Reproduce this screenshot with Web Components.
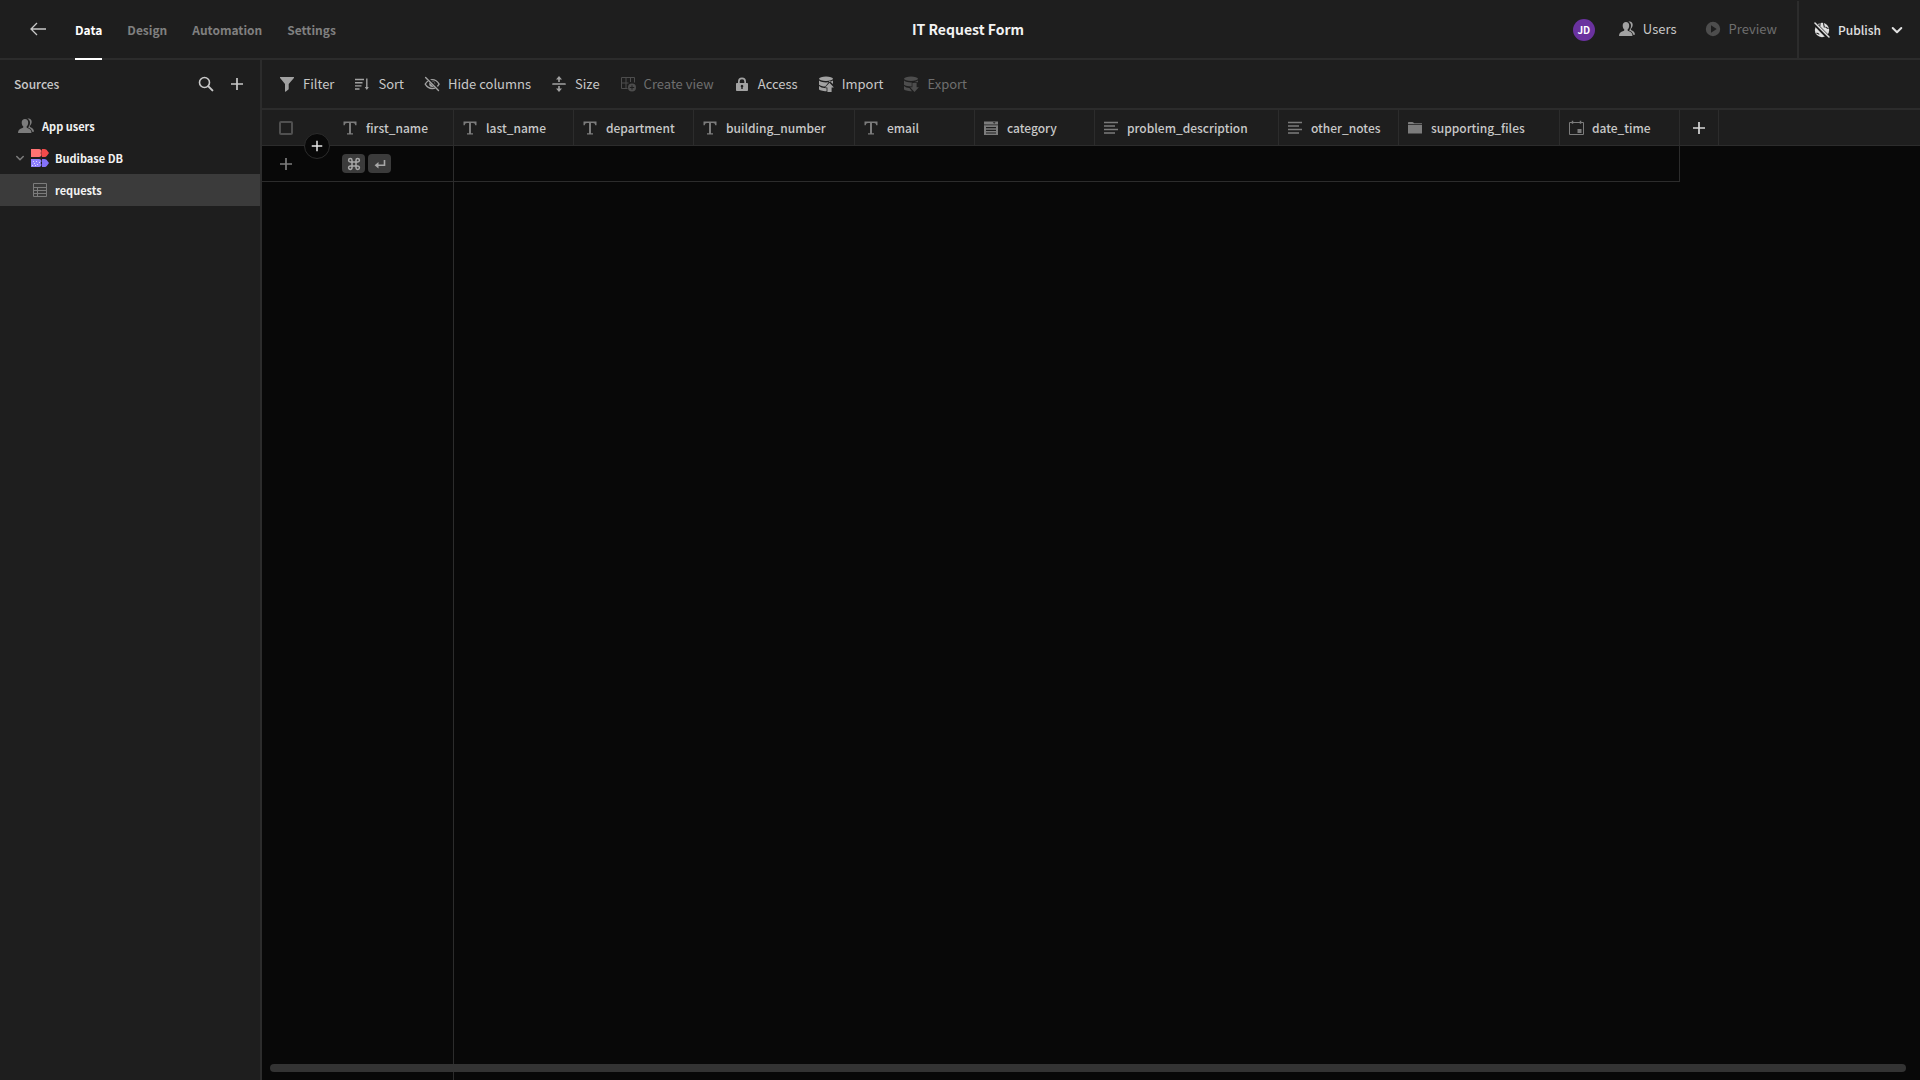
<!DOCTYPE html>
<html lang="en">
<head>
<meta charset="utf-8">
<meta name="viewport" content="width=device-width, initial-scale=1">
<title>IT Request Form</title>
<style>
:root{
  --bg:#1e1e1e; --canvas:#080808; --line:#2c2c2c; --selected:#3b3b3b;
  --text:#c8c8c8; --bright:#f2f2f2; --muted:#808080; --disabled:#6e6e6e; --icon:#a2a2a2; --icon-dim:#7c7c7c;
}
html,body{height:100%}
body{margin:0;background:var(--canvas);color:var(--text);font:13px/20px "Noto Sans CJK SC","Noto Sans",sans-serif}
</style>
</head>
<body>
<builder-app></builder-app>
<script>
const define = (name, html, setup) => {
  const template = document.createElement('template');
  template.innerHTML = `<style>
    *{box-sizing:border-box}
    button{font:inherit;color:inherit;background:none;border:0;padding:0;margin:0;display:inline-flex;align-items:center}
    a{color:inherit;text-decoration:none}
  </style>` + html;
  customElements.define(name, class extends HTMLElement {
    connectedCallback() {
      if (this.shadowRoot) return;
      this.attachShadow({mode: 'open'}).append(template.content.cloneNode(true));
      if (setup) setup(this, this.shadowRoot);
    }
  });
};

const S = 'fill="none" stroke="currentColor"';
const icons = {
  back: `<path ${S} stroke-width="1.3" d="M16 8H1M7 2L1 8l6 6"/>`,
  search: `<circle cx="6.5" cy="6.5" r="5" ${S} stroke-width="1.6"/><path ${S} stroke-width="2" stroke-linecap="round" d="M10.4 10.4l4 4"/>`,
  plus: `<path ${S} stroke-width="1.7" d="M8 2v12M2 8h12"/>`,
  chevron: `<path ${S} stroke-width="2" stroke-linecap="round" stroke-linejoin="round" d="M3.7 6L8 10.3 12.3 6"/>`,
  users: `<path fill="currentColor" d="M7 .9c2 0 3.2 1.5 3.2 3.5 0 1.600-.6 3-1.400 3.900-.5.700-.2 1.500.6 1.800 2.800 1 4 1.800 4.100 4.900H0c.1-3.100 1.500-4 4.400-4.900.9-.3 1.200-1.100.7-1.800C4.300 7.400 3.700 6 3.700 4.400c0-2 1.300-3.500 3.300-3.500z"/><path fill="currentColor" d="M9.300.6c2.700-.8 4.400.9 4.400 3.100 0 1.700-.8 3-1.700 4-.4.600-.2 1.200.5 1.500 2.300.8 3.400 2.200 3.500 4.600h-1.800c-.5-2.600-1.900-3.500-4.100-4.300 1.300-1.500 1.900-3 1.900-5C12 2.900 11 1.400 9.300.6z"/>`,
  filter: `<path fill="currentColor" d="M1.500 1h13c.5 0 .7.500.4.900L9.700 8v5.200L6.600 15.700c-.3.200-.6 0-.6-.4V8L1.100 1.900C.8 1.500 1 1 1.500 1z"/>`,
  sort: `<path ${S} stroke-width="1.400" d="M1 3.500h9M1 6.700h7.500M1 9.900h6.500M1 13h4.500M12.800 2.500v10"/><path fill="currentColor" d="M10.800 11h4l-2 3z"/>`,
  hide: `<path ${S} stroke-width="1.300" d="M1.200 8.100C3 5.200 5.300 3.600 8.200 3.600s5.200 1.600 6.900 4.500c-1.700 2.900-4 4.400-6.900 4.400S3 11 1.200 8.100z"/><circle cx="8.200" cy="8" r="3" fill="currentColor"/><circle cx="9.400" cy="6.800" r="1.200" fill="#1e1e1e"/><path stroke="#1e1e1e" stroke-width="3" d="M2 1l13 13"/><path ${S} stroke-width="1.400" stroke-linecap="round" d="M1.600 1.400l12.900 13"/>`,
  size: `<path ${S} stroke-width="1.700" stroke-linecap="round" d="M2 8h12"/><path ${S} stroke-width="1.600" d="M8 2v4M8 10v4"/><path fill="currentColor" d="M8 0l3 3.600H5zM8 16l3-3.600H5z"/>`,
  view: `<path ${S} stroke-width="1" d="M7.500 12.500H1.500v-11h13v5M1.500 7h7M6 1.500v11M10.500 1.500V6"/><circle cx="12" cy="11.500" r="4" fill="currentColor"/><path stroke="#1e1e1e" stroke-width="1" d="M12 9.300v4.400M9.800 11.500h4.400"/>`,
  lock: `<path fill="currentColor" fill-rule="evenodd" d="M13 7h-1V5.500a4 4 0 00-8 0V7H3c-.5 0-1 .4-1 1v6c0 .6.5 1 1 1h10c.5 0 1-.4 1-1V8c0-.6-.5-1-1-1zM5.700 5.500a2.300 2.300 0 014.600 0V7H5.700zM8.700 11.300V13H7.300v-1.700a1.300 1.300 0 111.400 0z"/>`,
  import: `<ellipse cx="8" cy="2.800" rx="7" ry="2.200" fill="currentColor"/><path fill="currentColor" d="M1 4.600c2 1.500 4.200 1.800 7 1.800s5-.4 7-1.800v3.500L11.500 5 7.300 10.500C4.700 10.400 2.500 10 1 8.700zM1 10.100c1.500 1.300 3.600 1.800 5.400 1.900l2.200.2v3C4.500 15.200 1 14.300 1 13zM11.500 6.700l4.400 4.800h-2.300V16H9.400v-4.500H7.100z"/>`,
  export: `<ellipse cx="8" cy="2.800" rx="7" ry="2.200" fill="currentColor"/><path fill="currentColor" d="M1 4.600c2 1.500 4.200 1.800 7 1.800s5-.4 7-1.800v1.600H8.700v4.200C5 10.400 2.500 10 1 8.700zM1 10.100c1.500 1.300 3 1.800 5.400 1.900l2.600 3.200C4.500 15.200 1 14.300 1 13zM11.500 16l4.400-4.700h-2.300V7H9.400v4.300H7.100z"/>`,
  text: `<path fill="currentColor" d="M1.500 1.500h13v3.800h-1.300c-.2-1.500-.7-2.200-2.200-2.200H9v10.100h2v1.300H5v-1.300h2V3.100H5c-1.500 0-2 .7-2.200 2.200H1.500z"/>`,
  options: `<path fill="currentColor" fill-rule="evenodd" d="M1 1.500h14v3H1zM9.800 2.300l1.400 1.400 1.400-1.400zM2 5.300h13V15H1V5.300zM3 7.100v1.200h10V7.100zm0 2.700V11h10V9.800zm0 2.600v1.200h10v-1.200z"/>`,
  lines: `<path ${S} stroke-width="1.400" d="M1 2.500h14M1 6h11M1 9.500h14M1 13h11"/>`,
  folder: `<path fill="currentColor" d="M1 2.700c0-.5.300-.8.800-.8h3.600c.4 0 .7.200 1 .5l.9.900H15v1H1zM1 4.900h14v8.600H1z"/>`,
  calendar: `<path ${S} stroke-width="1" d="M1.500 2.500h14v12h-14z"/><path ${S} stroke-width="1.500" d="M4.500.8v3M12.500.8v3"/><path fill="currentColor" d="M9.500 9h4v4h-4z"/>`,
  table: `<path ${S} stroke-width="1" d="M1.500 1.500h13v13h-13zM1.500 5.500h13M1.500 8.500h13M1.500 11.500h13M5.500 5.500v9"/>`,
  play: `<path fill="currentColor" fill-rule="evenodd" d="M8 .8a7.200 7.200 0 110 14.400A7.200 7.200 0 018 .8zM6 4.300v7.400L11.700 8z"/>`,
  globe: `<circle cx="8" cy="8" r="7.200" fill="currentColor"/><path fill="none" stroke="#1e1e1e" stroke-width="1.100" d="M6.200.8c-.6 1.200.200 2-.5 3.200M9.700 1c-.5 2 .9 3 .6 4.500M2.500 11c1 .7 2 .5 2.700 1.500M11.500 5c1 .5 1.500 1.500 3 1.500"/><path stroke="#1e1e1e" stroke-width="4" d="M0 1l15 15"/><path stroke="currentColor" stroke-width="1.500" stroke-linecap="round" d="M1 1l14 14"/>`,
  budibase: `<path fill="#ff7373" d="M0 0h8c1.600 0 2.500 1.300 2.500 2.500L9.500 4l1 1.500C10.500 6.700 9.600 8 8 8H0z"/><path fill="#f44b4b" d="M11 0h2.300c1.500 0 2.400.8 3 1.800L18 4l-1.700 2.200c-.6 1-1.500 1.800-3 1.800H11l-.8-4z"/><path fill="#9080ff" d="M0 10h8c1.600 0 2.500 1.300 2.500 2.500L9.500 14l1 1.500c0 1.200-.9 2.500-2.500 2.500H0z"/><path fill="#8471fa" d="M11 10h2.300c1.500 0 2.400.8 3 1.800L18 14l-1.700 2.200c-.6 1-1.500 1.800-3 1.800H11z"/><path fill="#ddd8ff" d="M2 12h1v1H2zM5 12h1v1H5zM8 13h1v1H8zM3 14h1v1H3zM6 15h1v1H6zM1 16h1v1H1zM4 16h1v1H4z"/>`,
  command: `<path ${S} stroke-width="1.500" d="M6 6V4.300A1.700 1.700 0 104.300 6h7.400A1.700 1.700 0 1010 4.300v7.400a1.700 1.700 0 101.700-1.700H4.300A1.700 1.700 0 106 11.700z"/>`,
  enter: `<path ${S} stroke-width="1.600" d="M12.500 4v5.200H4.200"/><path fill="currentColor" d="M6.500 6v6.400L2.600 9.200z"/>`
};
define('ui-icon', `<style>:host{display:block;flex:none;width:16px;height:16px}:host([name=budibase]){width:18px;height:18px}svg{display:block;width:100%;height:100%}</style>`, (el, root) => {
  const n = el.getAttribute('name'), s = n === 'budibase' ? 18 : 16;
  root.innerHTML += `<svg viewBox="0 0 ${s} ${s}" aria-hidden="true">${icons[n]}</svg>`;
});

define('nav-tab', `<style>
  :host{display:flex}
  a{display:flex;align-items:center;height:60px;font-size:12px;font-weight:700;color:var(--muted);border-bottom:2px solid transparent;border-top:2px solid transparent}
  :host([active]) a{color:#fff;border-bottom-color:#fff}
</style><a href="#"><slot></slot></a>`);

define('action-button', `<style>
  :host{display:block}
  button{gap:8px;white-space:nowrap}
  ui-icon{color:var(--icon)}
  :host([disabled]) button{color:var(--disabled)} :host([disabled]) ui-icon{color:#4d4d4d}
</style><button type="button"><ui-icon name="filter"></ui-icon><slot></slot></button>`, (el, root) => {
  root.querySelector('ui-icon').remove();
  const i = document.createElement('ui-icon'); i.setAttribute('name', el.getAttribute('icon'));
  root.querySelector('button').prepend(i);
  root.querySelector('button').disabled = el.hasAttribute('disabled');
});

define('app-header', `<style>
  :host{display:grid;grid-template-columns:1fr auto 1fr;height:60px;background:var(--bg);border-bottom:2px solid var(--line);padding-left:16px}
  nav{display:flex;gap:25px;padding-left:14px;height:60px}
  .back{margin-right:4px;color:var(--text);height:58px}
  h1{margin:0;font-size:14px;line-height:58px;font-weight:700;color:var(--bright)}
  .right{display:flex;justify-content:flex-end;align-items:center}
  .avatar{width:22px;height:22px;border-radius:50%;background:#6a329f;color:#fff;font-size:10px;line-height:22px;font-weight:700;text-align:center;margin-right:24px}
  action-button{margin-right:28px}
  .preview{margin-right:20px}
  .publish{height:58px;border-left:2px solid var(--line);padding:0 15px;gap:8px;font-size:12px;font-weight:500;color:#e0e0e0}
</style>
<nav><button class="back" type="button" aria-label="Back"><ui-icon name="back"></ui-icon></button>
<nav-tab active>Data</nav-tab><nav-tab>Design</nav-tab><nav-tab>Automation</nav-tab><nav-tab>Settings</nav-tab></nav>
<h1>IT Request Form</h1>
<div class="right"><div class="avatar">JD</div><action-button icon="users">Users</action-button><action-button class="preview" icon="play" disabled>Preview</action-button>
<button class="publish" type="button"><ui-icon name="globe"></ui-icon>Publish<ui-icon name="chevron"></ui-icon></button></div>`);

define('source-item', `<style>
  :host{display:block}
  a{display:flex;align-items:center;gap:8px;height:32px;padding-left:18px;font-size:11px;font-weight:700;color:var(--bright)}
  ::slotted(ui-icon){color:var(--icon-dim)}
  :host([level="1"]) a{gap:6px;padding-left:31px}
  :host([level="2"]) a{gap:7px;padding-left:32px}
  :host([active]) a{background:var(--selected)}
</style><a href="#"><slot name="icon"></slot><slot></slot></a>`);

define('app-sidebar', `<style>
  :host{display:block;width:262px;flex:none;background:var(--bg);border-right:2px solid var(--line)}
  header{display:flex;align-items:center;height:48px;padding:0 15px 0 14px;gap:15px;margin-bottom:2px}
  h2{margin:0;flex:1;font-size:12px;font-weight:500;line-height:20px}
  header button{color:var(--text)}
  .group{display:grid;grid-template-columns:1fr}
  .group>*{grid-area:1/1}
  .twist{width:12px;height:32px;margin-left:14px;color:var(--icon-dim)}
  .twist ui-icon{width:12px;height:12px}
</style>
<header><h2>Sources</h2><button type="button" aria-label="Search"><ui-icon name="search"></ui-icon></button><button type="button" aria-label="Add source"><ui-icon name="plus"></ui-icon></button></header>
<source-item><ui-icon slot="icon" name="users"></ui-icon>App users</source-item>
<div class="group"><source-item level="1"><ui-icon slot="icon" name="budibase"></ui-icon>Budibase DB</source-item><button class="twist" type="button" aria-label="Collapse"><ui-icon name="chevron"></ui-icon></button></div>
<source-item level="2" active><ui-icon slot="icon" name="table"></ui-icon>requests</source-item>`);

define('grid-toolbar', `<style>:host{display:flex;align-items:center;gap:20px;height:50px;flex:none;background:var(--bg);border-bottom:2px solid var(--line);padding:2px 17px 0}</style>
<action-button icon="filter">Filter</action-button><action-button icon="sort">Sort</action-button><action-button icon="hide">Hide columns</action-button><action-button icon="size">Size</action-button><action-button icon="view" disabled>Create view</action-button><action-button icon="lock">Access</action-button><action-button icon="import">Import</action-button><action-button icon="export" disabled>Export</action-button>`);

define('column-head', `<style>:host{display:flex;align-items:center;gap:8px;padding-left:8px;font-size:12px;font-weight:500;white-space:nowrap}::slotted(ui-icon){color:var(--icon-dim)}</style><slot></slot>`);

define('key-hint', `<style>:host{display:flex;align-items:center;justify-content:center;width:23px;height:19px;border-radius:4px;background:var(--selected);color:#a8a8a8}</style><slot></slot>`);

const columns = [['first_name','text',120],['last_name','text',120],['department','text',120],['building_number','text',161],['email','text',120],['category','options',120],['problem_description','lines',184],['other_notes','lines',120],['supporting_files','folder',161],['date_time','calendar',120]];
define('data-grid', `<style>
  :host{display:block;flex:1;position:relative;min-height:0;background:var(--canvas)}
  table{width:100%;height:100%;table-layout:fixed;border-spacing:0}
  th,td{padding:0;text-align:left;font-weight:500}
  th{height:36px;background:var(--bg);border-bottom:1px solid var(--line);border-right:1px solid var(--line)}
  th.gutter,th.rest{border-right:0}
  th.gutter{position:relative}
  .entry td{height:36px;border-bottom:1px solid var(--line)}
  .entry td.rest{border-bottom:0}
  .edge{border-right:1px solid var(--line)}
  input{appearance:none;display:block;width:14px;height:14px;margin:0 0 0 17px;border:2px solid #505050;border-radius:2px}
  .insert{position:absolute;left:42px;top:23px;width:26px;height:26px;border-radius:50%;background:var(--canvas);border:1px solid var(--line);justify-content:center;color:#e6e6e6}
  .insert ui-icon{width:14px;height:14px}
  .row-add{display:flex;margin-left:16px;color:var(--icon-dim)}
  .col-add{display:flex;width:100%;justify-content:center;color:#d8d8d8}
  .keys{display:flex;gap:3px;padding-left:8px}
  .scroll{position:absolute;left:8px;right:14px;bottom:8px;height:8px;border-radius:4px;background:#333}
</style>
<table><colgroup></colgroup>
<thead><tr><th class="gutter"><input type="checkbox" aria-label="Select all rows"><button class="insert" type="button" aria-label="Insert row"><ui-icon name="plus"></ui-icon></button></th></tr></thead>
<tbody><tr class="entry"><td><button class="row-add" type="button" aria-label="Add row"><ui-icon name="plus"></ui-icon></button></td><td class="edge"><div class="keys"><key-hint><ui-icon name="command"></ui-icon></key-hint><key-hint><ui-icon name="enter"></ui-icon></key-hint></div></td></tr>
<tr><td></td><td class="edge"></td><td colspan="11"></td></tr></tbody></table>
<div class="scroll"></div>`, (el, root) => {
  const col = w => `<col${w ? ` style="width:${w}px"` : ''}>`;
  root.querySelector('colgroup').innerHTML = col(72) + columns.map(c => col(c[2])).join('') + col(39) + col();
  root.querySelector('thead tr').insertAdjacentHTML('beforeend', columns.map(([name, icon]) => `<th scope="col"><column-head><ui-icon name="${icon}"></ui-icon>${name}</column-head></th>`).join('') + '<th><button class="col-add" type="button" aria-label="Add column"><ui-icon name="plus"></ui-icon></button></th><th class="rest"></th>');
  root.querySelector('.entry').insertAdjacentHTML('beforeend', columns.slice(1).map((c, i) => `<td${i === 8 ? ' class="edge"' : ''}></td>`).join('') + '<td class="rest"></td><td class="rest"></td>');
});

define('builder-app', `<style>
  :host{display:flex;flex-direction:column;height:100vh}
  .body{display:flex;flex:1;min-height:0}
  main{display:flex;flex-direction:column;flex:1;min-width:0}
</style><app-header></app-header><div class="body"><app-sidebar></app-sidebar><main><grid-toolbar></grid-toolbar><data-grid></data-grid></main></div>`);
</script>
</body>
</html>
